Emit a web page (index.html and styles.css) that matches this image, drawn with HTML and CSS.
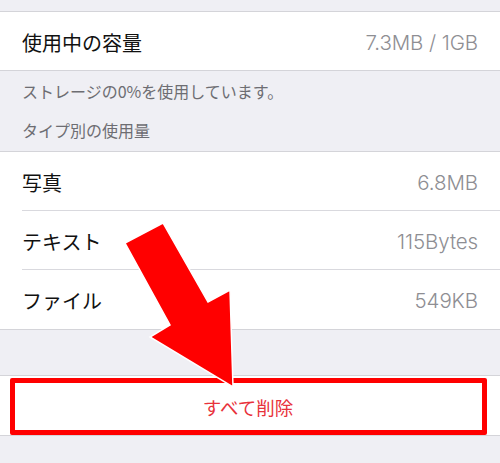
FILE: index.html
```html
<!DOCTYPE html>
<html lang="ja">
<head>
<meta charset="utf-8">
<link rel="stylesheet" href="styles.css">
</head>
<body>
<div class="page">
  <div class="group first">
    <div class="row"><span class="label">使用中の容量</span><span class="value">7.3MB / 1GB</span></div>
  </div>
  <div class="footer">
    <p>ストレージの0%を使用しています。</p>
    <p>タイプ別の使用量</p>
  </div>
  <div class="group">
    <div class="row sep"><span class="label">写真</span><span class="value">6.8MB</span></div>
    <div class="row sep"><span class="label">テキスト</span><span class="value">115Bytes</span></div>
    <div class="row"><span class="label">ファイル</span><span class="value">549KB</span></div>
  </div>
  <div class="group action">
    <div class="row center"><span class="danger">すべて削除</span></div>
    <div class="highlight"></div>
  </div>
  <svg class="arrow" width="500" height="463" viewBox="0 0 500 463">
    <polygon points="125,243 163,223 208,302 230,290 233,387 150,337 170,325" fill="#ff0000" stroke="#ffffff" stroke-width="1.5" stroke-linejoin="miter"/>
  </svg>
</div>
</body>
</html>
```

FILE: styles.css
```css
html, body {
  margin: 0;
  padding: 0;
  background: #efeff4;
}
.page {
  position: relative;
  width: 500px;
  height: 463px;
  overflow: hidden;
  padding-top: 11px;
  box-sizing: border-box;
  font-family: Inter, "Noto Sans CJK JP", sans-serif;
}
.group {
  background: #ffffff;
  border-top: 1px solid #d4d4d9;
  border-bottom: 1px solid #d4d4d9;
}
.group.action {
  position: relative;
  margin-top: 45px;
}
.row {
  height: 59px;
  display: flex;
  align-items: center;
  justify-content: space-between;
  padding: 2px 22px 0 22px;
  box-sizing: border-box;
}
.group.first .row {
  height: 58px;
}
.row.sep {
  position: relative;
}
.row.sep::after {
  content: "";
  position: absolute;
  left: 22px;
  right: 0;
  bottom: 0;
  height: 1px;
  background: #d9d9de;
}
.row.center {
  justify-content: center;
  padding-top: 2px;
}
.label {
  font-family: "Noto Sans CJK JP", sans-serif;
  font-size: 20px;
  color: #111111;
}
.value {
  font-size: 20.5px;
  font-weight: 300;
  color: #8e8e93;
  letter-spacing: -0.1px;
}
.danger {
  font-family: "Noto Sans CJK JP", sans-serif;
  font-size: 18.5px;
  color: #e8323c;
  margin-left: -4px;
}
.footer {
  padding: 10px 22px 11px 22px;
  display: flex;
  flex-direction: column;
  gap: 19px;
}
.footer p {
  margin: 0;
  height: 20px;
  line-height: 20px;
  font-family: "Noto Sans CJK JP", sans-serif;
  font-size: 16px;
  color: #6d6d72;
}
.highlight {
  position: absolute;
  left: 10px;
  right: 13px;
  top: 2px;
  bottom: 0px;
  border: 5px solid #ff0000;
  border-radius: 2px;
}
.arrow {
  position: absolute;
  left: 0;
  top: 0;
}
```
